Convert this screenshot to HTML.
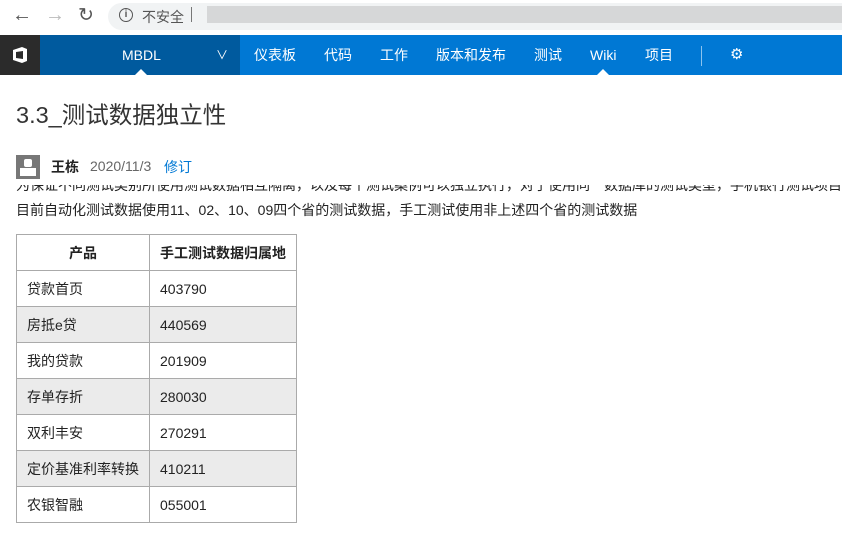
<!DOCTYPE html>
<html><head><meta charset="utf-8"><style>
body{margin:0;width:861px;height:549px;overflow:hidden;background:#fff;font-family:"Liberation Sans","Noto Sans CJK SC",sans-serif;position:relative}
.abs{position:absolute}
.nav a{position:absolute;top:35px;height:40px;line-height:40px;color:#fff;font-size:14px}
table{border-collapse:collapse;position:absolute;left:16px;top:234px;font-size:14px;color:#222}
td{border:1px solid #aaa;height:35px;padding:0 0 0 10px}
tr:nth-child(odd) td{background:#ebebeb}
tr:first-child td{background:#fff;font-weight:bold;text-align:center;padding:0}
</style></head><body>
<div class="abs" style="left:0;top:0;width:842px;height:34px;background:#fff"></div>
<div class="abs" style="left:12px;top:4px;font-size:20px;color:#555">&#8592;</div>
<div class="abs" style="left:45px;top:4px;font-size:20px;color:#bbb">&#8594;</div>
<div class="abs" style="left:78px;top:4px;font-size:19px;color:#555">&#8635;</div>
<div class="abs" style="left:108px;top:3px;width:734px;height:27px;border-radius:14px 0 0 14px;background:#f1f3f4"></div>
<div class="abs" style="left:207px;top:6px;width:635px;height:17px;background:#d6d7d8"></div>
<div class="abs" style="left:119px;top:8px;width:12px;height:12px;border:1.5px solid #555;border-radius:50%;font-size:10px;line-height:12px;text-align:center;color:#555;font-weight:bold">i</div>
<div class="abs" style="left:142px;top:7px;font-size:14px;color:#555">不安全</div>
<div class="abs" style="left:191px;top:7px;width:1px;height:15px;background:#777"></div>
<div class="abs" style="left:0;top:35px;width:40px;height:40px;background:#2b2b2b"></div>
<svg class="abs" style="left:10px;top:45px" width="20" height="20" viewBox="0 0 20 20"><path d="M3 5 L12 2 L17 4 L17 16 L12 18 L3 15 Z M6 7 L6 13 L13 14 L13 6 Z" fill="#fff" fill-rule="evenodd"/></svg>
<div class="abs" style="left:40px;top:35px;width:200px;height:40px;background:#005a9e"></div>
<div class="abs" style="left:240px;top:35px;width:602px;height:40px;background:#0078d4"></div>
<div class="nav">
<a style="left:122px">MBDL</a>
<a style="left:216px;font-size:12px">&#8744;</a>
<a style="left:254px">仪表板</a><a style="left:324px">代码</a><a style="left:380px">工作</a><a style="left:436px">版本和发布</a><a style="left:534px">测试</a><a style="left:590px">Wiki</a><a style="left:645px">项目</a><a style="left:730px;font-size:15px">&#9881;</a>
</div>
<div class="abs" style="left:701px;top:46px;width:1px;height:20px;background:#8cc3ee"></div>
<div class="abs" style="left:135px;top:69px;border:6px solid transparent;border-bottom-color:#fff;border-top:0"></div>
<div class="abs" style="left:597px;top:69px;border:6px solid transparent;border-bottom-color:#fff;border-top:0"></div>
<div class="abs" style="left:16px;top:96px;font-size:23.5px;color:#333">3.3_测试数据独立性</div>
<div class="abs" style="left:16px;top:155px;width:24px;height:24px;background:#777"><div class="abs" style="left:8px;top:4px;width:8px;height:8px;background:#fff;border-radius:2px"></div><div class="abs" style="left:4px;top:13px;width:16px;height:8px;background:#fff"></div></div>
<div class="abs" style="left:51px;top:157px;font-size:14px;font-weight:bold;color:#222">王栋</div>
<div class="abs" style="left:90px;top:158px;font-size:14px;color:#666">2020/11/3</div>
<div class="abs" style="left:164px;top:157px;font-size:14px;color:#0078d4">修订</div>
<div class="abs" style="left:16px;top:185px;width:826px;height:7px;overflow:hidden"><div style="margin-top:-10px;font-size:14px;color:#222;white-space:nowrap">为保证不同测试类别所使用测试数据相互隔离，以及每个测试案例可以独立执行，对于使用同一数据库的测试类型，手机银行测试项目</div></div>
<div class="abs" style="left:16px;top:200px;font-size:14px;color:#222;white-space:nowrap">目前自动化测试数据使用11、02、10、09四个省的测试数据，手工测试使用非上述四个省的测试数据</div>
<table>
<tr><td style="width:132px">产品</td><td style="width:146px">手工测试数据归属地</td></tr>
<tr><td>贷款首页</td><td>403790</td></tr>
<tr><td>房抵e贷</td><td>440569</td></tr>
<tr><td>我的贷款</td><td>201909</td></tr>
<tr><td>存单存折</td><td>280030</td></tr>
<tr><td>双利丰安</td><td>270291</td></tr>
<tr><td>定价基准利率转换</td><td>410211</td></tr>
<tr><td>农银智融</td><td>055001</td></tr>
</table>
</body></html>
